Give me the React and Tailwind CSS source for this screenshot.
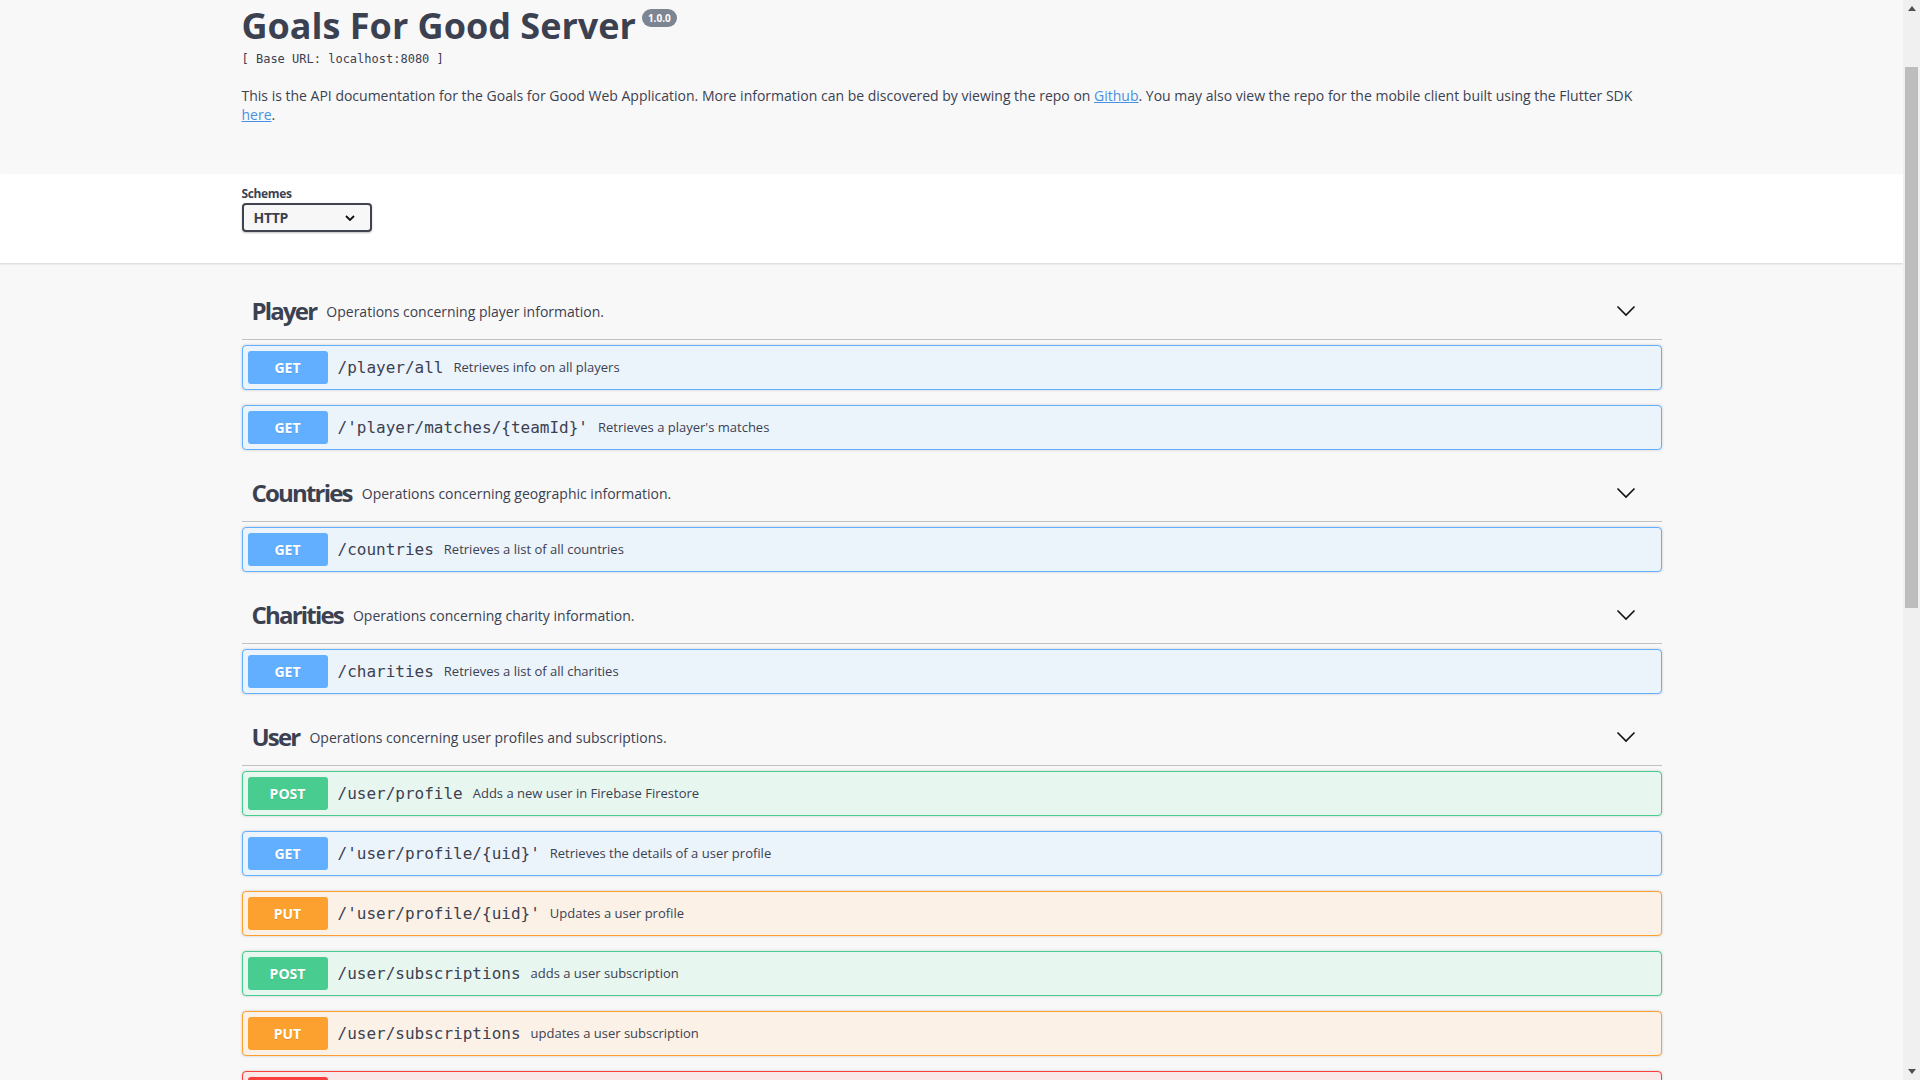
import React from "react";

// Swagger-ish API docs page
const sections = [
  {
    name: "Player",
    description: "Operations concerning player information.",
    ops: [
      { method: "GET", path: "/player/all", summary: "Retrieves info on all players" },
      { method: "GET", path: "/'player/matches/{teamId}'", summary: "Retrieves a player's matches" },
    ],
  },
  {
    name: "Countries",
    description: "Operations concerning geographic information.",
    ops: [{ method: "GET", path: "/countries", summary: "Retrieves a list of all countries" }],
  },
  {
    name: "Charities",
    description: "Operations concerning charity information.",
    ops: [{ method: "GET", path: "/charities", summary: "Retrieves a list of all charities" }],
  },
  {
    name: "User",
    description: "Operations concerning user profiles and subscriptions.",
    ops: [
      { method: "POST", path: "/user/profile", summary: "Adds a new user in Firebase Firestore" },
      { method: "GET", path: "/'user/profile/{uid}'", summary: "Retrieves the details of a user profile" },
      { method: "PUT", path: "/'user/profile/{uid}'", summary: "Updates a user profile" },
      { method: "POST", path: "/user/subscriptions", summary: "adds a user subscription" },
      { method: "PUT", path: "/user/subscriptions", summary: "updates a user subscription" },
      { method: "DELETE", path: "/user/subscriptions", summary: "deletes a user subscription" },
    ],
  },
];

const methodStyles = {
  GET: { block: "bg-[#ebf3fb] border-[#61affe]", badge: "bg-[#61affe]" },
  POST: { block: "bg-[#e8f6f0] border-[#49cc90]", badge: "bg-[#49cc90]" },
  PUT: { block: "bg-[#fbf1e6] border-[#fca130]", badge: "bg-[#fca130]" },
  DELETE: { block: "bg-[#fae7e7] border-[#f93e3e]", badge: "bg-[#f93e3e]" },
};

const mono = { fontFamily: '"DejaVu Sans Mono", "Liberation Mono", monospace' };

const Chevron = () => (
  <svg width="20" height="12" viewBox="0 0 20 12" fill="none">
    <polyline points="1.5,1.5 10,10 18.5,1.5" stroke="#111" strokeWidth="1.6" />
  </svg>
);

const OpBlock = ({ op }) => {
  const s = methodStyles[op.method];
  return (
    <div
      className={`mb-[15px] flex h-[45px] items-center rounded-[4px] border p-[5px] shadow-[0_0_3px_rgba(0,0,0,0.19)] ${s.block}`}
    >
      <div
        className={`w-[80px] shrink-0 rounded-[3px] py-[6px] text-center text-[14px] leading-[21px] font-bold text-white [text-shadow:0_1px_0_rgba(0,0,0,0.1)] ${s.badge}`}
      >
        {op.method}
      </div>
      <span className="px-[10px] text-[16px] leading-[21px] text-[#3b4151]" style={mono}>
        {op.path}
      </span>
      <span className="pt-[1px] text-[13px] text-[#3b4151]">{op.summary}</span>
    </div>
  );
};

const TagSection = ({ section }) => (
  <div>
    <div className="mb-[5px] flex h-[57px] items-center border-b border-[#3b4151]/30 pl-[10px] pr-[26px]">
      <h3 className="text-[24px] font-bold tracking-[-0.075em] text-[#3b4151]">{section.name}</h3>
      <span className="ml-[10px] text-[14px] text-[#3b4151]">{section.description}</span>
      <div className="ml-auto">
        <Chevron />
      </div>
    </div>
    {section.ops.map((op, i) => (
      <OpBlock key={i} op={op} />
    ))}
  </div>
);

const Scrollbar = () => (
  <div className="flex h-full w-[17px] shrink-0 flex-col bg-[#f0f0f0]">
    <div className="flex h-[17px] items-center justify-center">
      <svg width="8" height="5" viewBox="0 0 8 5">
        <polygon points="4,0 8,5 0,5" fill="#505050" />
      </svg>
    </div>
    <div className="mx-[2px] mt-[50px] h-[541px] bg-[#bdbdbd]"></div>
    <div className="mt-auto flex h-[17px] items-center justify-center">
      <svg width="8" height="5" viewBox="0 0 8 5">
        <polygon points="0,0 8,0 4,5" fill="#505050" />
      </svg>
    </div>
  </div>
);

function App() {
  return (
    <div
      className="flex h-screen w-full overflow-hidden bg-[#f8f8f8] text-[#3b4151]"
      style={{ fontFamily: '"Open Sans", "Noto Sans", sans-serif' }}
    >
      <div className="min-w-0 flex-1 overflow-hidden">
        {/* Info */}
        <div className="mx-auto w-[1420px] pt-[8px] pb-[50px]">
          <div className="flex items-start">
            <h2 className="text-[36px] leading-[36px] font-bold text-[#3b4151]">Goals For Good Server</h2>
            <span className="mt-[1px] ml-[6px] flex h-[18px] items-center rounded-full bg-[#7d8492] px-[6px] text-[10px] font-bold text-white">
              1.0.0
            </span>
          </div>
          <div className="mt-[7px] text-[12px] leading-[16px] font-light text-[#3b4151]" style={mono}>
            [ Base URL: localhost:8080 ]
          </div>
          <p className="mt-[19px] text-[14px] leading-[19px] text-[#3b4151]">
            This is the API documentation for the Goals for Good Web Application. More information can be discovered
            by viewing the repo on{" "}
            <a className="text-[#4990e2] underline" href="#">
              Github
            </a>
            . You may also view the repo for the mobile client built using the Flutter SDK
            <br />
            <a className="text-[#4990e2] underline" href="#">
              here
            </a>
            .
          </p>
        </div>

        {/* Schemes */}
        <div className="h-[89px] bg-white shadow-[0_1px_2px_0_rgba(0,0,0,0.15)]">
          <div className="mx-auto w-[1420px] pt-[12px]">
            <div className="text-[12px] leading-[16px] font-bold tracking-[-0.03em] text-[#3b4151]">Schemes</div>
            <div className="mt-[1px] flex h-[29px] w-[130px] items-center justify-between rounded-[4px] border-2 border-[#41444e] bg-[#f7f7f7] pr-[15px] pl-[10px] shadow-[0_1px_2px_0_rgba(0,0,0,0.25)]">
              <span className="text-[14px] font-bold tracking-[-0.02em] text-[#3b4151]">HTTP</span>
              <svg width="10" height="6" viewBox="0 0 10 6" fill="none">
                <polyline points="1,1 5,5 9,1" stroke="#111" strokeWidth="1.8" />
              </svg>
            </div>
          </div>
        </div>

        {/* Operations */}
        <div className="mx-auto w-[1420px] pt-[20px]">
          {sections.map((s) => (
            <TagSection key={s.name} section={s} />
          ))}
        </div>
      </div>
      <Scrollbar />
    </div>
  );
}

export default App;
